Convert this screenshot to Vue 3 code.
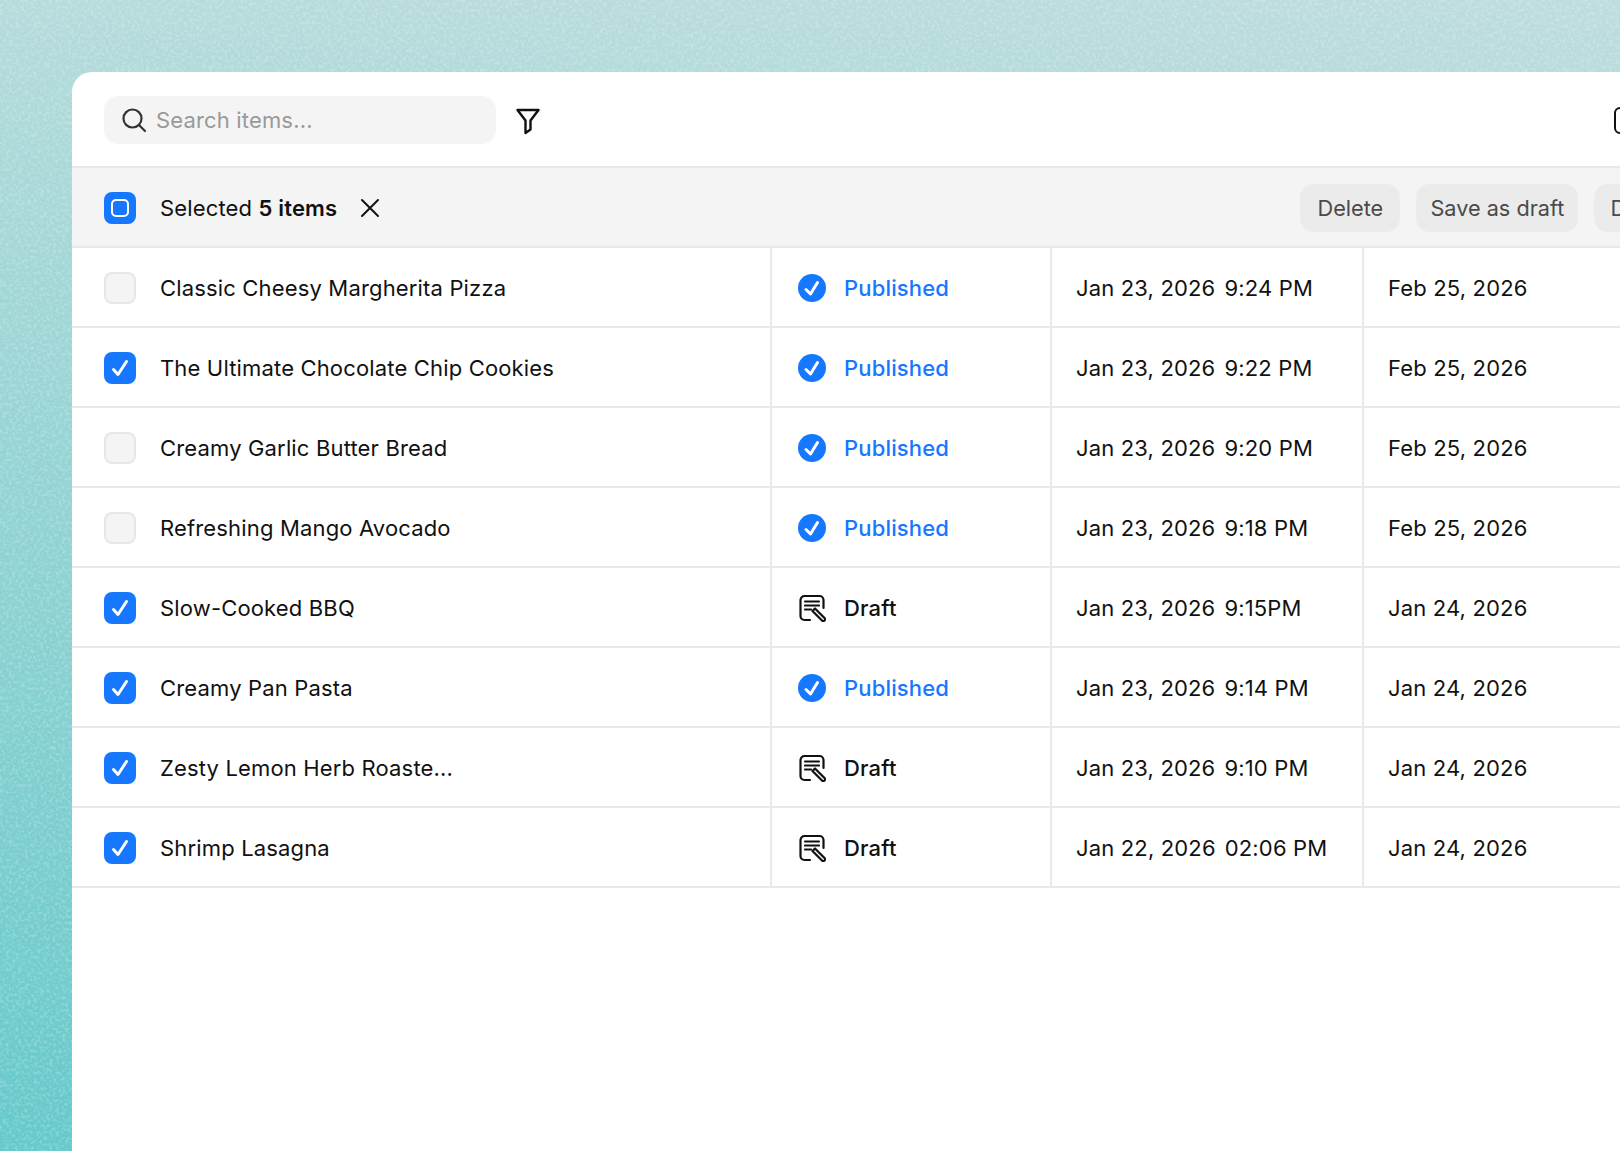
<script setup>
const rows = [
  { name: 'Classic Cheesy Margherita Pizza', checked: false, status: 'Published', date: 'Jan 23, 2026', time: '9:24 PM', created: 'Feb 25, 2026' },
  { name: 'The Ultimate Chocolate Chip Cookies', checked: true, status: 'Published', date: 'Jan 23, 2026', time: '9:22 PM', created: 'Feb 25, 2026' },
  { name: 'Creamy Garlic Butter Bread', checked: false, status: 'Published', date: 'Jan 23, 2026', time: '9:20 PM', created: 'Feb 25, 2026' },
  { name: 'Refreshing Mango Avocado', checked: false, status: 'Published', date: 'Jan 23, 2026', time: '9:18 PM', created: 'Feb 25, 2026' },
  { name: 'Slow-Cooked BBQ', checked: true, status: 'Draft', date: 'Jan 23, 2026', time: '9:15PM', created: 'Jan 24, 2026' },
  { name: 'Creamy Pan Pasta', checked: true, status: 'Published', date: 'Jan 23, 2026', time: '9:14 PM', created: 'Jan 24, 2026' },
  { name: 'Zesty Lemon Herb Roaste...', checked: true, status: 'Draft', date: 'Jan 23, 2026', time: '9:10 PM', created: 'Jan 24, 2026' },
  { name: 'Shrimp Lasagna', checked: true, status: 'Draft', date: 'Jan 22, 2026', time: '02:06 PM', created: 'Jan 24, 2026' },
];
</script>

<template>
  <div class="page">
    <svg class="grain" width="1620" height="1151">
      <filter id="grain-noise" x="0" y="0" width="100%" height="100%">
        <feTurbulence type="fractalNoise" baseFrequency="0.32" numOctaves="2" seed="7" />
        <feColorMatrix values="0 0 0 0 1  0 0 0 0 1  0 0 0 0 1  4 0 0 0 -1.85" />
      </filter>
      <rect width="1620" height="1151" filter="url(#grain-noise)" opacity="0.2" />
    </svg>

    <div class="panel">
      <div class="toolbar">
        <div class="search">
          <svg class="search-icon" width="26" height="26" viewBox="0 0 26 26" fill="none" stroke="#333" stroke-width="2.200" stroke-linecap="round">
            <circle cx="11.500" cy="11.500" r="9" />
            <path d="M18.200 18.200 24 24" />
          </svg>
          <span class="placeholder">Search items...</span>
        </div>
        <svg class="filter-icon" width="26" height="28" viewBox="0 0 26 28" fill="none" stroke="#111" stroke-width="2.400" stroke-linejoin="round">
          <path d="M2.500 3h21l-8 10.500v9l-5 3.500V13.500z" />
        </svg>
        <div class="view-icons">
          <span class="view-icon"></span>
          <span class="view-icon"></span>
          <span class="view-icon"></span>
        </div>
      </div>

      <div class="selection-bar">
        <span class="checkbox checkbox-on">
          <span class="partial"></span>
        </span>
        <span class="selected-text">Selected <b>5 items</b></span>
        <svg class="clear-icon" width="22" height="22" viewBox="0 0 22 22" fill="none" stroke="#111" stroke-width="2" stroke-linecap="round">
          <path d="M3 3l16 16M19 3 3 19" />
        </svg>
        <div class="actions">
          <button class="action">Delete</button>
          <button class="action">Save as draft</button>
          <button class="action">Duplicate</button>
        </div>
      </div>

      <div v-for="row in rows" :key="row.name" class="row">
        <div class="cell cell-name">
          <span class="checkbox" :class="{ 'checkbox-on': row.checked }">
            <svg v-if="row.checked" width="32" height="32" viewBox="0 0 32 32" fill="none" stroke="#fff" stroke-width="3" stroke-linecap="round" stroke-linejoin="round">
              <path d="M9.500 17.500l4.500 5L22.500 9.500" />
            </svg>
          </span>
          <span class="name">{{ row.name }}</span>
        </div>
        <div class="cell cell-status">
          <template v-if="row.status === 'Published'">
            <svg class="status-icon" width="28" height="28" viewBox="0 0 28 28">
              <circle cx="14" cy="14" r="14" fill="#1677ff" />
              <path d="M8 15.500l4.500 4.500 7-11.500" fill="none" stroke="#fff" stroke-width="3" stroke-linecap="round" stroke-linejoin="round" />
            </svg>
            <span class="status published">Published</span>
          </template>
          <template v-else>
            <svg class="status-icon" width="28" height="28" viewBox="0 0 28 28" fill="none" stroke="#111" stroke-width="2.200" stroke-linecap="round" stroke-linejoin="round">
              <path d="M12 26H6.500a4 4 0 0 1-4-4V6a4 4 0 0 1 4-4h15a4 4 0 0 1 4 4v8" />
              <path d="M7 7.500h14M7 11.500h14M7 15.500h6" />
              <path d="M14.500 17l2.500-2.500 9.500 9.500a1.700 1.700 0 0 1-2.500 2.500z" />
            </svg>
            <span class="status draft">Draft</span>
          </template>
        </div>
        <div class="cell cell-updated">
          <span>{{ row.date }}</span>
          <span class="time">{{ row.time }}</span>
        </div>
        <div class="cell cell-created">{{ row.created }}</div>
      </div>
    </div>
  </div>
</template>

<style scoped>
.page {
  position: relative;
  width: 1620px;
  height: 1151px;
  overflow: hidden;
  padding: 72px 0 0 72px;
  box-sizing: border-box;
  background: linear-gradient(184deg, #bedddd 0%, #66c9ca 100%);
  font-family: Inter, 'Liberation Sans', sans-serif;
  letter-spacing: 0.16px;
  color: #111;
}

.grain {
  position: absolute;
  inset: 0;
}

.panel {
  position: relative;
  width: 1681px;
  height: 1079px;
  background: #fff;
  border-radius: 20px 0 0 0;
}

.toolbar {
  display: flex;
  align-items: center;
  height: 94px;
  padding: 24px 32px 22px;
  box-sizing: border-box;
}

.search {
  display: flex;
  align-items: center;
  width: 392px;
  height: 48px;
  padding-left: 17px;
  box-sizing: border-box;
  background: #f4f4f4;
  border-radius: 14px;
}

.search-icon {
  flex: none;
}

.placeholder {
  margin-left: 9px;
  font-size: 22px;
  color: #999;
}

.filter-icon {
  margin: 2px 0 0 19px;
}

.view-icons {
  display: flex;
  gap: 10px;
  margin-left: auto;
}

.view-icon {
  width: 29px;
  height: 27px;
  box-sizing: border-box;
  border: 2px solid #111;
  border-radius: 6px;
}

.selection-bar {
  display: flex;
  align-items: center;
  height: 82px;
  padding: 2px 32px 0;
  box-sizing: border-box;
  background: #f4f4f4;
  border-top: 2px solid #e9e9e9;
  border-bottom: 2px solid #e9e9e9;
}

.checkbox {
  flex: none;
  display: flex;
  align-items: center;
  justify-content: center;
  width: 32px;
  height: 32px;
  box-sizing: border-box;
  border: 2px solid #e6e6e6;
  border-radius: 8px;
  background: #f4f4f4;
}

.checkbox-on {
  border: none;
  background: #1677ff;
}

.partial {
  width: 18px;
  height: 18px;
  box-sizing: border-box;
  border: 2px solid #fff;
  border-radius: 5px;
}

.selected-text {
  margin-left: 24px;
  font-size: 22px;
}

.selected-text b {
  font-weight: 600;
}

.clear-icon {
  margin-left: 22px;
}

.actions {
  display: flex;
  gap: 16px;
  margin-left: auto;
}

.action {
  height: 48px;
  min-width: 100px;
  padding: 0 14px;
  border: none;
  border-radius: 14px;
  background: #ebebeb;
  color: #4a4a4a;
  font: 400 21.700px Inter, 'Liberation Sans', sans-serif;
}

.action:last-child {
  padding-left: 16px;
}

.row {
  display: flex;
  height: 80px;
  box-sizing: border-box;
  border-bottom: 2px solid #e9e9e9;
  font-size: 22px;
}

.cell {
  display: flex;
  align-items: center;
  box-sizing: border-box;
  white-space: nowrap;
  padding-top: 2px;
}

.cell-name {
  width: 698px;
  padding-left: 32px;
}

.name {
  margin-left: 24px;
}

.cell-status {
  width: 280px;
  padding-left: 26px;
  border-left: 2px solid #e9e9e9;
}

.status {
  margin-left: 18px;
  font-weight: 500;
}

.published {
  color: #1677ff;
}

.cell-updated {
  width: 312px;
  padding-left: 24px;
  border-left: 2px solid #e9e9e9;
}

.time {
  margin-left: 9px;
}

.cell-created {
  padding-left: 24px;
  border-left: 2px solid #e9e9e9;
}
</style>
